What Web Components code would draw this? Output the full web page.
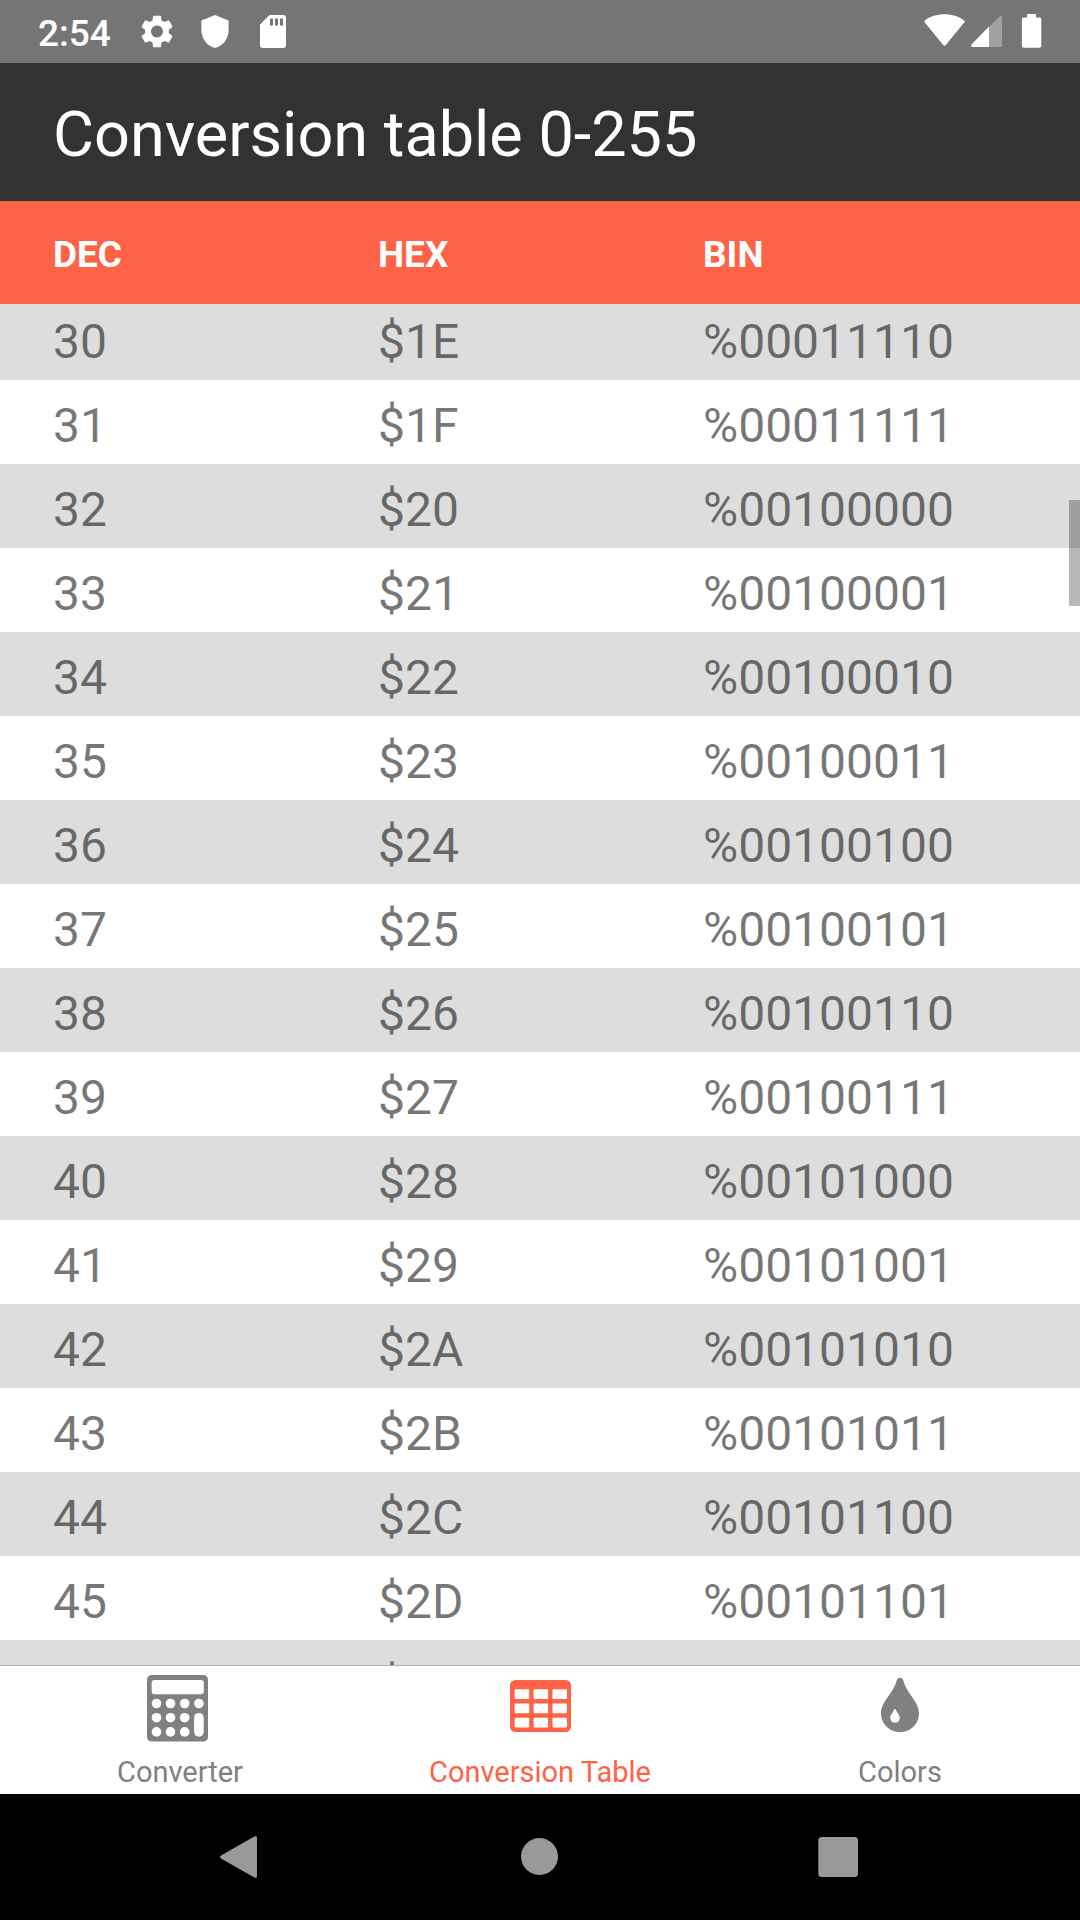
<!DOCTYPE html>
<html lang="en">
<head>
<meta charset="utf-8">
<meta name="viewport" content="width=device-width, initial-scale=1">
<title>Conversion table 0-255</title>
<style>
  html, body { height: 100%; margin: 0; }
  body { font-family: Roboto, "Noto Sans", sans-serif; background: #fff; overflow: hidden; }
</style>
</head>
<body>
<app-screen>
  <status-bar slot="top" time="2:54"></status-bar>
  <title-bar slot="top">Conversion table 0-255</title-bar>
  <conversion-table from="30" to="46"></conversion-table>
  <tab-bar slot="bottom">
    <tab-item href="#converter" icon="calculator">Converter</tab-item>
    <tab-item href="#table" icon="table" current>Conversion Table</tab-item>
    <tab-item href="#colors" icon="drop">Colors</tab-item>
  </tab-bar>
  <system-nav slot="bottom"></system-nav>
</app-screen>

<script>
class BaseElement extends HTMLElement {
  connectedCallback() {
    if (this.shadowRoot) return;
    this.attachShadow({ mode: "open" }).innerHTML = this.render();
    this.ready();
  }
  ready() {}
}

customElements.define("app-screen", class extends BaseElement {
  render() {
    return `
      <style>
        :host { display: flex; flex-direction: column; height: 100vh; }
        main { flex: 1; min-height: 0; display: flex; }
      </style>
      <slot name="top"></slot>
      <main><slot></slot></main>
      <slot name="bottom"></slot>`;
  }
});

customElements.define("status-bar", class extends BaseElement {
  render() {
    return `
      <style>
        :host { display: flex; align-items: center; justify-content: space-between; height: 63px;
                padding: 0 30px 0 38px; background: #757575; color: #fff; flex: none; }
        div { display: flex; align-items: center; }
        .left { gap: 18px; }
        .right { gap: 4px; }
        time { font-size: 37px; font-weight: 500; line-height: 59px; padding: 4px 8px 0 0; }
        svg { display: block; fill: currentColor; }
      </style>
      <div class="left">
        <time>${this.getAttribute("time")}</time>
        <svg width="40" height="41" viewBox="0 0 40 41" aria-hidden="true"><path transform="translate(.2 .7) scale(1.65)" d="M19.14 12.94c.04-.3.06-.61.06-.94 0-.32-.02-.64-.07-.94l2.03-1.58c.18-.14.23-.41.12-.61l-1.92-3.32c-.12-.22-.37-.29-.59-.22l-2.39.96c-.5-.38-1.03-.7-1.62-.94l-.36-2.54c-.04-.24-.24-.41-.48-.41h-3.84c-.24 0-.43.17-.47.41l-.36 2.54c-.59.24-1.13.57-1.62.94l-2.39-.96c-.22-.08-.47 0-.59.22L2.74 8.87c-.12.21-.08.47.12.61l2.03 1.58c-.05.3-.09.63-.09.94s.02.64.07.94l-2.03 1.58c-.18.14-.23.41-.12.61l1.92 3.32c.12.22.37.29.59.22l2.39-.96c.5.38 1.03.7 1.62.94l.36 2.54c.05.24.24.41.48.41h3.84c.24 0 .44-.17.47-.41l.36-2.54c.59-.24 1.13-.56 1.62-.94l2.39.96c.22.08.47 0 .59-.22l1.92-3.32c.12-.22.07-.47-.12-.61l-2.01-1.58zM12 15.6c-1.98 0-3.6-1.62-3.6-3.6s1.62-3.6 3.6-3.6 3.6 1.62 3.6 3.6-1.62 3.6-3.6 3.6z"/></svg>
        <svg width="40" height="41" viewBox="0 0 40 41" aria-hidden="true"><path d="M20 4 33.6 9.6V19.500C33.600 28 27.500 35.200 20 37 12.500 35.200 6.400 28 6.400 19.500V9.600Z"/></svg>
        <svg width="40" height="41" viewBox="0 0 40 41" aria-hidden="true"><path fill-rule="evenodd" d="M16.500 4H30.300Q33 4 33 6.700V34.300Q33 37 30.300 37H9.700Q7 37 7 34.300V13.500ZM17 7.500V14.500H20V7.500ZM22 7.500V14.500H25V7.500ZM27 7.500V14.500H30V7.500Z"/></svg>
      </div>
      <div class="right">
        <svg width="42" height="41" viewBox="0 0 42 41" aria-hidden="true"><path d="M.8 11.500Q-.2 10.500 .8 9.600C6 5.500 13 3.300 20.500 3.300S35 5.500 40.200 9.600Q41.200 10.500 40.200 11.500L22 33.800Q20.500 35.500 19 33.800Z"/></svg>
        <svg width="38" height="41" viewBox="0 0 38 41" aria-hidden="true"><path opacity=".32" d="M19 16 29.700 5.400Q32 4 32 6.500V36H19Z"/><path d="M19 15.500V36H2.400Q.2 35.500 1.500 33.500Z"/></svg>
        <svg width="38" height="41" viewBox="0 0 38 41" aria-hidden="true"><path d="M15 3H24V6.500H27.500Q29.300 6.500 29.300 8.300V35Q29.300 36.800 27.500 36.800H11.700Q9.900 36.800 9.900 35V8.300Q9.900 6.500 11.700 6.500H15Z"/></svg>
      </div>`;
  }
});

customElements.define("title-bar", class extends BaseElement {
  render() {
    return `
      <style>
        :host { display: block; flex: none; background: #323232; color: #fff; }
        h1 { margin: 0; padding: 6px 53px 0; font-size: 63px; font-weight: 400; line-height: 132px; }
      </style>
      <h1><slot></slot></h1>`;
  }
});

customElements.define("conversion-table", class extends BaseElement {
  render() {
    const rows = [];
    for (let n = +this.getAttribute("from"); n <= +this.getAttribute("to"); n++) {
      const hex = n.toString(16).toUpperCase().padStart(2, "0");
      const bin = n.toString(2).padStart(8, "0");
      rows.push(`<tr><td>${n}</td><td>$${hex}</td><td>%${bin}</td></tr>`);
    }
    return `
      <style>
        :host { display: block; position: relative; flex: 1; min-width: 0; }
        .scroller { height: 100%; overflow: hidden; }
        table { display: block; }
        thead, tbody { display: block; }
        thead { position: sticky; top: 0; background: #ff6347; color: #fff; }
        tr { display: grid; grid-template-columns: repeat(3, 1fr); padding: 0 52px 0 53px; }
        th, td { padding: 0; text-align: left; }
        th { font-size: 37px; font-weight: 700; line-height: 98px; padding-top: 5px; }
        td { font-size: 48px; line-height: 77px; padding-top: 7px; color: rgba(0, 0, 0, .54); }
        tbody tr:nth-child(odd) { background: #ddd; }
        .thumb { position: absolute; top: 299px; right: 0; width: 11px; height: 106px; background: rgba(0, 0, 0, .28); }
      </style>
      <div class="scroller">
        <table>
          <thead><tr><th scope="col">DEC</th><th scope="col">HEX</th><th scope="col">BIN</th></tr></thead>
          <tbody>${rows.join("")}</tbody>
        </table>
      </div>
      <div class="thumb"></div>`;
  }
  ready() {
    // The bars around the table must be in place before it has anything to scroll.
    queueMicrotask(() => {
      this.shadowRoot.querySelector(".scroller").scrollTop = 8;
    });
  }
});

customElements.define("tab-bar", class extends BaseElement {
  render() {
    return `
      <style>
        :host { display: block; flex: none; background: #fff; border-top: 1px solid #b2b2b2; }
        nav { display: flex; }
      </style>
      <nav><slot></slot></nav>`;
  }
});

const tabIcons = {
  calculator: `<path fill-rule="evenodd" d="M5 1H56Q61 1 61 6V62.500Q61 67.500 56 67.500H5Q0 67.500 0 62.500V6Q0 1 5 1ZM7.500 6Q4.700 6 4.700 8.800V17.500Q4.700 20.300 7.500 20.300H54Q56.800 20.300 56.800 17.500V8.800Q56.800 6 54 6Z"/>
    <g fill="#fff"><circle cx="9.500" cy="29.500" r="4.800"/><circle cx="23.500" cy="29.500" r="4.800"/><circle cx="37.700" cy="29.500" r="4.800"/><circle cx="51.900" cy="29.500" r="4.800"/>
    <circle cx="9.500" cy="43.700" r="4.800"/><circle cx="23.500" cy="43.700" r="4.800"/><circle cx="37.700" cy="43.700" r="4.800"/>
    <circle cx="9.500" cy="57.900" r="4.800"/><circle cx="23.500" cy="57.900" r="4.800"/><circle cx="37.700" cy="57.900" r="4.800"/>
    <rect x="47.100" y="38.900" width="9.600" height="23.800" rx="4.800"/></g>`,
  table: `<rect x="3" y="6" width="61" height="52" rx="5.500"/>
    <g fill="#fff"><rect x="7.700" y="15.300" width="14.500" height="9.700" rx="1"/><rect x="26.600" y="15.300" width="14.500" height="9.700" rx="1"/><rect x="45.500" y="15.300" width="14.500" height="9.700" rx="1"/>
    <rect x="7.700" y="29.500" width="14.500" height="9.700" rx="1"/><rect x="26.600" y="29.500" width="14.500" height="9.700" rx="1"/><rect x="45.500" y="29.500" width="14.500" height="9.700" rx="1"/>
    <rect x="7.700" y="43.800" width="14.500" height="9.700" rx="1"/><rect x="26.600" y="43.800" width="14.500" height="9.700" rx="1"/><rect x="45.500" y="43.800" width="14.500" height="9.700" rx="1"/></g>`,
  drop: `<path d="M33 3.700C34.800 3.700 35.800 4.600 36.300 6.400 40.500 21 52 27 52 39.500A19 18.700 0 0 1 14 39.500C14 27 25.500 21 29.700 6.400 30.200 4.600 31.200 3.700 33 3.700Z"/>
    <path fill="#fff" d="M28 35C28.500 35 28.700 35.300 28.800 35.600 29.900 39 32.800 41 32.800 44A4.800 4.800 0 0 1 23.200 44C23.200 41 26.100 39 27.200 35.600 27.300 35.300 27.500 35 28 35Z"/>`
};

customElements.define("tab-item", class extends BaseElement {
  render() {
    const current = this.hasAttribute("current") ? ' aria-current="page"' : "";
    return `
      <style>
        :host { display: block; flex: 1; color: #808080; }
        :host([current]) { color: #ff6347; }
        a { display: flex; flex-direction: column; align-items: center; gap: 13px; padding: 8px 0 5px;
            color: inherit; text-decoration: none; font-size: 29px; line-height: 34px; }
        svg { display: block; fill: currentColor; }
      </style>
      <a href="${this.getAttribute("href")}"${current}>
        <svg width="66" height="68" viewBox="0 0 66 68" aria-hidden="true">${tabIcons[this.getAttribute("icon")]}</svg>
        <slot></slot>
      </a>`;
  }
});

customElements.define("system-nav", class extends BaseElement {
  render() {
    return `
      <style>
        :host { display: flex; justify-content: center; flex: none; background: #000; }
        button { display: flex; align-items: center; justify-content: center; flex: 0 1 300px; height: 126px;
                 padding: 0; border: 0; background: none; color: #999; }
        svg { display: block; fill: currentColor; }
      </style>
      <button type="button" aria-label="Back"><svg width="64" height="64" viewBox="0 0 64 64"><path d="M46.300 11.600Q49 10.200 49 13V51Q49 53.800 46.300 52.400L13 33.600Q11 32 13 30.400Z"/></svg></button>
      <button type="button" aria-label="Home"><svg width="64" height="64" viewBox="0 0 64 64"><circle cx="31.500" cy="31.500" r="18.500"/></svg></button>
      <button type="button" aria-label="Recent apps"><svg width="64" height="64" viewBox="0 0 64 64"><rect x="10.300" y="12" width="39.700" height="40" rx="3.500"/></svg></button>`;
  }
});
</script>
</body>
</html>
